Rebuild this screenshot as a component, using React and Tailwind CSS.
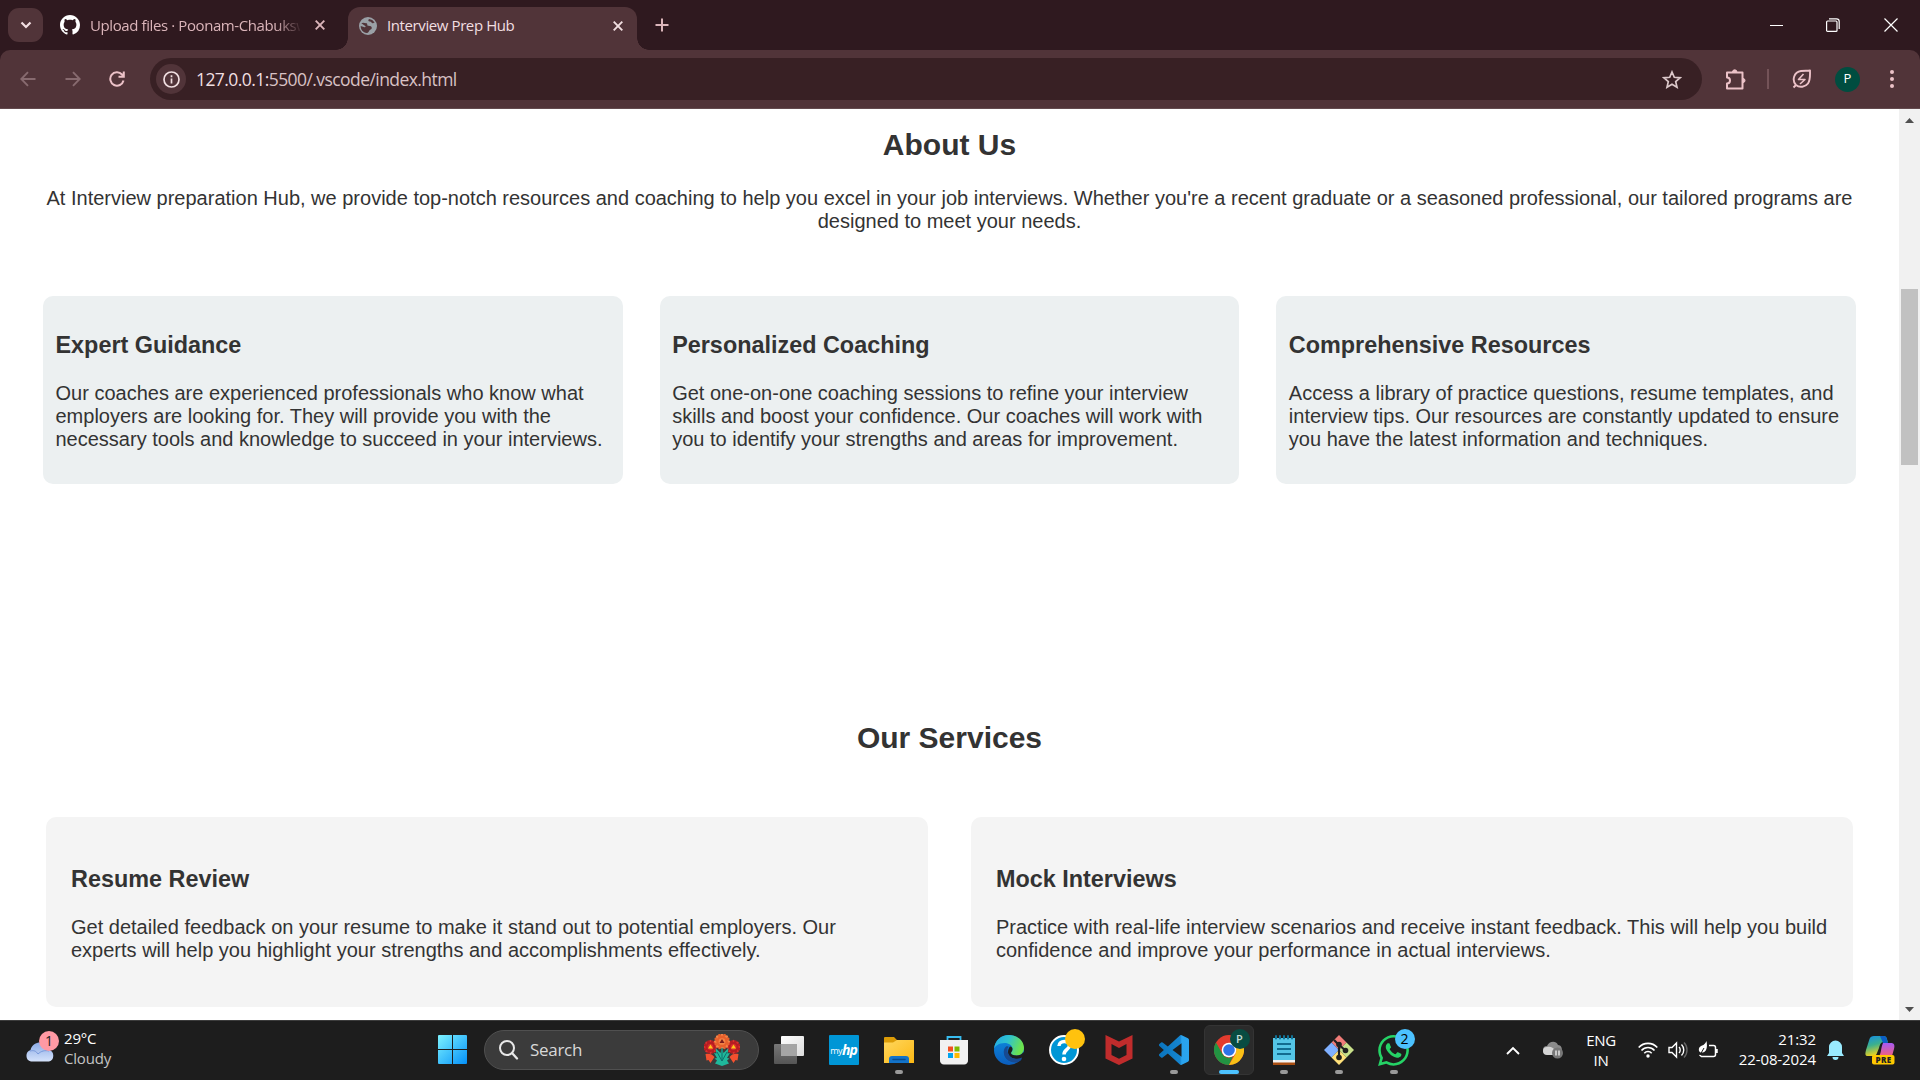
import React from "react";

const UI = "font-['Open_Sans','Noto_Sans',sans-serif]";

function TitleBar() {
  return (
    <div className="h-[50px] bg-[#2f191f] flex items-start shrink-0">
      <div className="h-[34px] ml-2 mt-2 w-[35px] rounded-[11px] bg-[#513439] flex items-center justify-center">
        <svg width="12" height="8" viewBox="0 0 12 8" fill="none" stroke="#f3dfe2" strokeWidth="2.2"><path d="M1.5 1.5 6 6 10.500 1.500" /></svg>
      </div>
      <div className="w-[305px] h-[50px] flex items-center pl-[17px]">
        <svg width="20" height="20" viewBox="0 0 16 16" fill="#fff" className="shrink-0"><path d="M8 0C3.580 0 0 3.580 0 8c0 3.540 2.290 6.530 5.470 7.590.4.070.55-.17.55-.38 0-.19-.01-.82-.01-1.490-2.010.370-2.530-.49-2.690-.94-.09-.23-.48-.94-.82-1.130-.28-.15-.68-.52-.01-.53.63-.01 1.080.58 1.230.82.72 1.210 1.870.87 2.330.66.070-.52.28-.87.51-1.070-1.780-.2-3.640-.89-3.640-3.950 0-.87.31-1.590.82-2.150-.08-.2-.36-1.020.08-2.120 0 0 .67-.21 2.200.82.64-.18 1.320-.27 2-.27s1.360.09 2 .27c1.530-1.040 2.200-.82 2.200-.82.44 1.100.16 1.920.08 2.120.51.56.82 1.270.82 2.150 0 3.070-1.870 3.750-3.650 3.950.29.25.54.73.54 1.480 0 1.070-.01 1.930-.01 2.200 0 .21.15.46.55.38A8.010 8.010 0 0 0 16 8c0-4.420-3.580-8-8-8z" /></svg>
        <div className={"ml-[10px] w-[210px] whitespace-nowrap text-[15px] tracking-[-0.4px] text-[#dbb5ba] [mask-image:linear-gradient(to_right,#000_185px,transparent_212px)] " + UI}>Upload files · Poonam-Chabuksw</div>
        <Cross color="#dbb5ba" className="ml-[15px]" />
      </div>
      <div className="relative w-[289px] h-[43px] mt-[7px] rounded-t-[12px] bg-[#513439] flex items-center pl-[11px] pb-[7px] pt-[1px]">
        <div className="absolute -left-3 bottom-0 w-3 h-3 bg-[radial-gradient(circle_at_0_0,transparent_11.5px,#513439_12px)]" />
        <div className="absolute -right-3 bottom-0 w-3 h-3 bg-[radial-gradient(circle_at_100%_0,transparent_11.5px,#513439_12px)]" />
        <svg width="18" height="18" viewBox="0 0 18 18"><circle cx="9" cy="9" r="9" fill="#9aa0a6" /><path d="M2.300 6.300C4 5 5.500 6.200 7.300 6.200 9 6.200 7.500 8.700 9.500 8.800c2 .1 3.300.7 3.300 2.200 0 1.800-2.300 1.500-2.800 3-.3 1-1 2.200-2.300 2C4 15.600 1.600 12.500 1.700 9l3.800 1.200c1.500.3 1.500-1.200 0-1.700zM10 1.900C8.800 3.200 9.300 4.600 10.800 4.500c1.700-.1 1.500 2 3.200 1.700.9-.2 1.200-.5 1.600-.7A7.500 7.500 0 0 0 10 1.900z" fill="#513439" /></svg>
        <span className={"ml-[10px] w-[215px] text-[15px] tracking-[-0.4px] text-[#f1dfe1] whitespace-nowrap " + UI}>Interview Prep Hub</span>
        <Cross color="#f1dfe1" className="ml-[11px]" />
      </div>
      <svg width="14" height="14" viewBox="0 0 14 14" stroke="#dbb5ba" strokeWidth="2" className="ml-[18px] mt-[18px]"><path d="M7 .5v13M.5 7h13" /></svg>
      <div className="ml-auto flex items-center h-[49px] pr-[22px]">
        <svg width="13" height="14" viewBox="0 0 13 14" stroke="#fff"><path d="M0 7.500h13" /></svg>
        <svg width="14" height="14" viewBox="0 0 14 14" fill="none" stroke="#fff" strokeWidth="1.200" className="ml-[43px]"><rect x=".6" y="3" width="10.400" height="10.400" rx="1" /><path d="M3 .8h7.500a2.700 2.700 0 0 1 2.700 2.700V11" /></svg>
        <svg width="14" height="14" viewBox="0 0 14 14" stroke="#fff" strokeWidth="1.200" className="ml-[44px]"><path d="m.5.5 13 13m0-13-13 13" /></svg>
      </div>
    </div>
  );
}

function Cross({ color, className }) {
  return <svg width="10" height="10" viewBox="0 0 10 10" stroke={color} strokeWidth="1.900" className={"shrink-0 " + className}><path d="m.7.7 8.600 8.600m0-8.600L.7 9.300" /></svg>;
}

function Toolbar() {
  return (
    <div className="bg-[#2f191f] shrink-0">
      <div className="h-[59px] bg-[#513439] rounded-t-[10px] border-b border-[#634a4e] flex items-center">
        <svg width="16" height="16" viewBox="0 0 16 16" fill="none" stroke="#876a6f" strokeWidth="1.900" className="ml-5 shrink-0"><path d="M15.500 8H1.500M8 1.200 1.300 8 8 14.800" /></svg>
        <svg width="16" height="16" viewBox="0 0 16 16" fill="none" stroke="#876a6f" strokeWidth="1.900" className="ml-[29px] shrink-0"><path d="M.5 8h14M8 1.200 14.700 8 8 14.800" /></svg>
        <svg width="16" height="16" viewBox="0 0 16 16" fill="none" stroke="#ecc2c8" strokeWidth="2" className="ml-[28px] shrink-0"><path d="M14.500 9.500A6.700 6.700 0 1 1 13 3.500l1.500 1.700M14.800.5v5.300H9.500" /></svg>
        <div className="ml-[25px] w-[1552px] shrink-0 h-[42px] rounded-full bg-[#382024] flex items-center pl-[6px] pr-[20px]">
          <div className="size-[30px] rounded-full bg-[#513439] flex items-center justify-center">
            <svg width="17" height="17" viewBox="0 0 17 17" fill="none" stroke="#f1dfe1" strokeWidth="1.700"><circle cx="8.500" cy="8.500" r="7.500" /><path d="M8.500 7.500v5M8.500 4.300v1.900" /></svg>
          </div>
          <span className={"ml-[10px] text-[17.5px] tracking-[-0.57px] text-[#f1dfe1] whitespace-nowrap " + UI}>127.0.0.1:<span className="text-[#d8c2c5]">5500/.vscode/index.html</span></span>
          <svg width="20" height="19" viewBox="0 0 20 19" fill="none" stroke="#dcc8ca" strokeWidth="1.700" className="ml-auto"><path d="m10 2 2.300 5.300 5.700.5-4.300 3.800 1.300 5.600-5-3-5 3 1.300-5.600L2 7.800l5.700-.5z" /></svg>
        </div>
        <svg width="21" height="21" viewBox="0 0 21 21" fill="none" stroke="#ecc2c8" strokeWidth="2" strokeLinejoin="round" className="ml-[23px] shrink-0"><path d="M2 3.500h15.500v16H2v-5c4-.3 4-6 0-6z" /><path d="M7.500 3a2.200 2.200 0 0 1 4.400 0zM18 9.500a2 2 0 0 1 0 4z" fill="#ecc2c8" strokeWidth="1" /></svg>
        <div className="w-[2px] h-5 bg-[#745358] ml-[21px]" />
        <svg width="20" height="20" viewBox="0 0 20 20" fill="none" stroke="#ecc2c8" strokeWidth="1.900" strokeLinejoin="round" className="ml-[23px] shrink-0"><path d="M1.500 18.500 4 16M4 16C-.5 11 2 3 9 2c4-.5 6 0 9-.5C18 6 18.500 11 16 14.500S7.500 19 4 16z" /><path d="M11.500 5 6.500 10.500h6.500L8 15" strokeWidth="1.600" /></svg>
        <div className={"ml-[23px] size-[25px] shrink-0 rounded-full bg-[#004d40] text-white text-[13px] flex items-center justify-center " + UI}>P</div>
        <div className="ml-[30px] flex flex-col gap-[3px]">
          <i className="size-1 rounded-full bg-[#ecc2c8]" /><i className="size-1 rounded-full bg-[#ecc2c8]" /><i className="size-1 rounded-full bg-[#ecc2c8]" />
        </div>
      </div>
    </div>
  );
}

const features = [
  ["Expert Guidance", ["Our coaches are experienced professionals who know what", "employers are looking for. They will provide you with the", "necessary tools and knowledge to succeed in your interviews."]],
  ["Personalized Coaching", ["Get one-on-one coaching sessions to refine your interview", "skills and boost your confidence. Our coaches will work with", "you to identify your strengths and areas for improvement."]],
  ["Comprehensive Resources", ["Access a library of practice questions, resume templates, and", "interview tips. Our resources are constantly updated to ensure", "you have the latest information and techniques."]],
];
const services = [
  ["Resume Review", ["Get detailed feedback on your resume to make it stand out to potential employers. Our", "experts will help you highlight your strengths and accomplishments effectively."]],
  ["Mock Interviews", ["Practice with real-life interview scenarios and receive instant feedback. This will help you build", "confidence and improve your performance in actual interviews."]],
];

function Lines({ lines }) {
  return lines.map((l) => <span key={l} className="block whitespace-nowrap">{l}</span>);
}

function Page() {
  return (
    <div className="flex-1 min-h-0 flex bg-white">
      <main className="flex-1 overflow-hidden text-[#333] text-[20px] leading-[23px] font-['Liberation_Sans',Arial,sans-serif]">
        <h2 className="mt-[19px] text-center font-bold text-[30px] leading-[34px]">About Us</h2>
        <p className="mt-[25px] text-center"><Lines lines={["At Interview preparation Hub, we provide top-notch resources and coaching to help you excel in your job interviews. Whether you're a recent graduate or a seasoned professional, our tailored programs are", "designed to meet your needs."]} /></p>
        <div className="mt-[63px] mx-[43px] grid grid-cols-3 gap-[37px]">
          {features.map(([t, l]) => (
            <section key={t} className="h-[188px] rounded-[10px] bg-[#ecf0f1] pl-[12.5px] pt-[36px]">
              <h3 className="font-bold text-[23.4px] leading-[27px]">{t}</h3>
              <p className="mt-[23px]"><Lines lines={l} /></p>
            </section>
          ))}
        </div>
        <h2 className="mt-[237px] text-center font-bold text-[30px] leading-[34px]">Our Services</h2>
        <div className="mt-[62px] mx-[46px] grid grid-cols-2 gap-[43px]">
          {services.map(([t, l]) => (
            <section key={t} className="h-[190px] rounded-[10px] bg-[#f4f4f4] pl-[25px] pt-[49px]">
              <h3 className="font-bold text-[23.4px] leading-[27px]">{t}</h3>
              <p className="mt-[23px]"><Lines lines={l} /></p>
            </section>
          ))}
        </div>
      </main>
      <div className="w-[21px] bg-[#f1f1f1] flex flex-col items-center">
        <svg width="9" height="5" viewBox="0 0 9 5" className="mt-[9px]" fill="#505050"><path d="M0 5 4.500 0 9 5z" /></svg>
        <div className="mt-[166px] w-[17px] h-[176px] bg-[#c1c1c1]" />
        <svg width="9" height="5" viewBox="0 0 9 5" className="mt-auto mb-[8px]" fill="#505050"><path d="M0 0h9L4.500 5z" /></svg>
      </div>
    </div>
  );
}

function Slot({ children, running, active, badge }) {
  return (
    <div className={"relative w-[50px] h-[50px] mx-[2.500px] rounded-[6px] flex items-center justify-center shrink-0 " + (active ? "bg-[#2b2b2b] border border-[#343434]" : "")}>
      {children}
      {badge}
      {running && <i className="absolute bottom-[1px] left-[21px] w-2 h-1 rounded-full bg-[#9a9a9a]" />}
      {active && <i className="absolute bottom-0 left-[14px] w-5 h-1 rounded-full bg-[#4cc2ff]" />}
    </div>
  );
}

function Flower() {
  const bloom = (x, y, r, a, b, c) => (
    <g key={x + "," + y} transform={`translate(${x} ${y})`}>
      {Array.from({ length: 16 }, (_, i) => <ellipse key={i} cx="0" cy={-r * 0.68} rx={r * 0.2} ry={r * 0.34} fill={i % 2 ? a : b} transform={`rotate(${i * 22.5})`} />)}
      <circle r={r * 0.72} fill={a} /><circle r={r * 0.42} fill={b} /><path d="M-2.500 1.500 0-2.500 2.500 1.500z" fill={c} />
    </g>
  );
  return (
    <svg width="36" height="32" viewBox="0 0 36 32">
      <path d="M1.500 20c3.500-1 7 0 9 3l-4 6-2-3-2 .5zM34.500 20c-3.500-1-7 0-9 3l4 6 2-3 2 .5z" fill="#f4502f" />
      {bloom(6.500, 13, 7, "#b71c22", "#dc2f2c", "#ffc61a")}
      {bloom(29.500, 13, 7, "#b71c22", "#dc2f2c", "#ffc61a")}
      {bloom(18, 7.500, 8, "#e8602c", "#f58345", "#7c1c1c")}
      <path d="M18 13l1.500 6 5-5-1 5.500 2.500-.5-3 5 2.500.5-2.500 2 2 3-7 2.500-7-2.500 2-3-2.500-2 2.500-.5-3-5 2.500.5-1-5.500 5 5z" fill="#1fb89b" />
      <path d="M18 14v13M18 27l-5-9M18 27l5-9" stroke="#0f6f6c" strokeWidth="1" fill="none" />
    </svg>
  );
}

const icons = {
  taskView: <svg width="30" height="28" viewBox="0 0 30 28"><defs><linearGradient id="tv1" x2="1" y2="1"><stop stopColor="#fff" /><stop offset="1" stopColor="#dcdcdc" /></linearGradient><linearGradient id="tv2" x2="0" y2="1"><stop stopColor="#777" /><stop offset="1" stopColor="#555" /></linearGradient></defs><rect y="8" width="23" height="20" rx="1" fill="url(#tv2)" /><rect x="7" width="23" height="20" rx="1" fill="url(#tv1)" /><path d="M7 8h16v12H7z" fill="#a5a5a5" /></svg>,
  hp: <div className="size-[30px] rounded-[1px] bg-[#0096d6] text-white flex items-center justify-center font-['Open_Sans',sans-serif] leading-none"><span className="text-[9px] tracking-[-0.5px]">my</span><b className="text-[14px] italic tracking-[-1px]">hp</b></div>,
  folder: <svg width="30" height="28" viewBox="0 0 30 28"><defs><linearGradient id="fo" x2="1" y2="1"><stop stopColor="#ffd75e" /><stop offset="1" stopColor="#fcb814" /></linearGradient></defs><path d="M0 2a1 1 0 0 1 1-1h9l3 3h16a1 1 0 0 1 1 1v8H0z" fill="#dc9c07" /><path d="M0 6.500h9L13 4h16a1 1 0 0 1 1 1v22H0z" fill="url(#fo)" /><path d="M5 27v-4a3 3 0 0 1 3-3h14a3 3 0 0 1 3 3v4z" fill="#1373c9" /><path d="M9 23.500h12" stroke="#084b8e" strokeWidth="1.500" strokeLinecap="round" /></svg>,
  store: <svg width="30" height="30" viewBox="0 0 30 30"><path d="M8.500 7V2h13v5" fill="none" stroke="#38bdf0" strokeWidth="1.800" /><path d="M1 5h28v20a4 4 0 0 1-4 4.500H5A4 4 0 0 1 1 25z" fill="#f1f1f1" /><path d="M9 11.500h5v5H9z" fill="#f25022" /><path d="M15.500 11.500h5v5h-5z" fill="#7fba00" /><path d="M9 18h5v5H9z" fill="#00a4ef" /><path d="M15.500 18h5v5h-5z" fill="#ffb900" /></svg>,
  edge: <svg width="30" height="30" viewBox="0 0 30 30"><defs><linearGradient id="e1" x1="0" x2="1" y1="0" y2=".3"><stop stopColor="#22a7e8" /><stop offset=".5" stopColor="#2fc3cf" /><stop offset="1" stopColor="#6ce34d" /></linearGradient><linearGradient id="e2" x2="0" y2="1"><stop stopColor="#0d8de0" /><stop offset="1" stopColor="#0b5dbd" /></linearGradient></defs><circle cx="15" cy="15" r="15" fill="url(#e2)" /><path d="M0 14C1 5 7 0 15 0c9 0 15 6 15 13 0 5-3.500 7.500-7.500 7.500-3.500 0-5.500-1-5.500-2.500 0-1 1.500-1.500 1.500-4C18.500 10.500 15 8 10.500 8 5 8 1 11 0 14z" fill="url(#e1)" /><path d="M13 11c-7 4-2 17 9 16.500 2.500 0 5-2 6-4-6 3-16 0-15-8 0-1.500 1-3 2-3.500z" fill="#174a91" /><path d="M18.500 14c0 2.500-1.500 3-1.500 4 0 1.500 2 2.500 5.500 2.500 3 0 5.500-1 7-3.500l1 2.500-2 3.500c-6 2.500-14.500.5-14.500-6 0-2.500 1-4.500 2-5.500 1.500 0 2.500 1.300 2.500 2.500z" fill="#1d1d1d" /><path d="M13.500 14c-.5 8 7 12 14.500 8.500l-1.500 3C20 29 9 26 10 16z" fill="#174a91" /></svg>,
  help: <svg width="30" height="30" viewBox="0 0 30 30"><circle cx="15" cy="15" r="14" fill="#0096d6" stroke="#fff" strokeWidth="2" /><path d="M10 11c0-6 10.500-6 10.500-.5 0 4-5.500 4-5.500 9" fill="none" stroke="#fff" strokeWidth="3.500" /><circle cx="15" cy="24" r="2.300" fill="#fff" /></svg>,
  mcafee: <svg width="28" height="30" viewBox="0 0 28 30"><path d="m.5 0L14 6.500 27.500 0v23.500L14 30 .5 23.500zm6 9v11l7.500 3.700 7.500-3.700V9L14 13z" fill="#c02c2c" fillRule="evenodd" /></svg>,
  vscode: <svg width="30" height="30" viewBox="0 0 24 24"><defs><linearGradient id="vs" x2="1"><stop stopColor="#0a74bd" /><stop offset=".7" stopColor="#1585d0" /><stop offset=".76" stopColor="#29a3ee" /><stop offset="1" stopColor="#2aa5f0" /></linearGradient></defs><path fill="url(#vs)" d="M23.150 2.587L18.210.21a1.494 1.494 0 0 0-1.705.29l-9.460 8.630-4.120-3.128a.999.999 0 0 0-1.276.057L.327 7.261A1 1 0 0 0 .326 8.740L3.899 12 .326 15.260a1 1 0 0 0 .001 1.479L1.650 17.940a.999.999 0 0 0 1.276.057l4.120-3.128 9.460 8.630a1.492 1.492 0 0 0 1.704.290l4.942-2.377A1.500 1.500 0 0 0 24 20.060V3.939a1.500 1.500 0 0 0-.85-1.352zm-5.146 14.861L10.826 12l7.178-5.448v10.896z" /></svg>,
  chrome: <svg width="30" height="30" viewBox="0 0 30 30"><circle cx="15" cy="15" r="15" fill="#e33b2e" /><path d="M2 7.500 8.500 19c2.500 4.500 8 4.500 10.500 2L15 30A15 15 0 0 1 2 7.500z" fill="#229342" /><path d="M28 7.500H15c7 1 8.500 7 6.500 11.200L15 30A15 15 0 0 0 28 7.500z" fill="#fbc116" /><circle cx="15" cy="15" r="7.300" fill="#fff" /><circle cx="15" cy="15" r="5.800" fill="#2f73e8" /></svg>,
  notepad: <svg width="22" height="30" viewBox="0 0 22 30"><path d="M0 26h22v4H0z" fill="#a94e12" /><path d="M0 24h22v3.500H0z" fill="#f3f3f3" /><path d="M0 3h22v22H0z" fill="#54c5e6" /><path d="M3 1v2.500m4-2.500v2.500m4-2.500v2.500m4-2.500v2.500m4-2.500v2.500" stroke="#117296" strokeWidth="2" strokeLinecap="round" /><path d="M4 9h14M4 14h14M4 19h14" stroke="#126c90" strokeWidth="2" /></svg>,
  git: <svg width="30" height="30" viewBox="0 0 30 30"><path d="m15 0 7.500 7.500-7.500 7.500-7.500-7.500z" fill="#f07c78" /><path d="M7.500 7.500 15 15l-7.500 7.500L0 15z" fill="#80b0ff" /><path d="M22.500 7.500 30 15l-7.500 7.500L15 15z" fill="#c8e08a" /><path d="m15 15 7.500 7.500L15 30l-7.500-7.500z" fill="#ffe17a" /><path d="m10 5 5 5v14M15 10l6 5" stroke="#202020" strokeWidth="2.200" fill="none" /><circle cx="15" cy="9.500" r="2.800" fill="#202020" /><circle cx="21.500" cy="15.500" r="2.800" fill="#202020" /><circle cx="15" cy="22.500" r="2.800" fill="#202020" /></svg>,
  whatsapp: <svg width="31" height="31" viewBox="0 0 24 24" fill="#25d366"><path d="M17.472 14.382c-.297-.149-1.758-.867-2.030-.967-.273-.099-.471-.148-.67.150-.197.297-.767.966-.94 1.164-.173.199-.347.223-.644.075-.297-.15-1.255-.463-2.390-1.475-.883-.788-1.480-1.761-1.653-2.059-.173-.297-.018-.458.130-.606.134-.133.298-.347.446-.520.149-.174.198-.298.298-.497.099-.198.050-.371-.025-.520-.075-.149-.669-1.612-.916-2.207-.242-.579-.487-.5-.669-.510-.173-.008-.371-.01-.570-.01-.198 0-.520.074-.792.372-.272.297-1.040 1.016-1.040 2.479 0 1.462 1.065 2.875 1.213 3.074.149.198 2.096 3.200 5.077 4.487.709.306 1.262.489 1.694.625.712.227 1.360.195 1.871.118.571-.085 1.758-.719 2.006-1.413.248-.694.248-1.289.173-1.413-.074-.124-.272-.198-.570-.347m-5.421 7.403h-.004a9.870 9.870 0 0 1-5.031-1.378l-.361-.214-3.741.982.998-3.648-.235-.374a9.860 9.860 0 0 1-1.510-5.260c.001-5.450 4.436-9.884 9.888-9.884 2.640 0 5.122 1.030 6.988 2.898a9.825 9.825 0 0 1 2.893 6.994c-.003 5.450-4.437 9.884-9.885 9.884m8.413-18.297A11.815 11.815 0 0 0 12.050 0C5.495 0 .160 5.335.157 11.892c0 2.096.547 4.142 1.588 5.945L.057 24l6.305-1.654a11.882 11.882 0 0 0 5.683 1.448h.005c6.554 0 11.890-5.335 11.893-11.893a11.821 11.821 0 0 0-3.480-8.413z" /></svg>,
};

function Taskbar() {
  return (
    <div className={"h-[60px] shrink-0 bg-[#1d1d1d] border-t border-[#3c3c3c] pb-px flex items-center text-white " + UI}>
      <div className="relative ml-[25px] w-[30px] h-[30px] -mt-[3px]">
        <svg width="30" height="20" viewBox="0 0 30 20" className="mt-[8px]"><defs><linearGradient id="cl" x2="0" y2="1"><stop stopColor="#8cabe6" /><stop offset="1" stopColor="#d4e2fb" /></linearGradient></defs><path d="M6 19.500A6 6 0 0 1 5.500 8C7 2.500 11 .5 15 .5c5 0 8 3 9 7.500a6 6 0 0 1 0 11.500z" fill="url(#cl)" /><path d="M5 9c4-1 6 0 8 3 3-3 7-4 11-3" fill="none" stroke="#7898da" /></svg>
        <span className="absolute left-[14px] -top-[3px] size-5 rounded-full bg-[#ff99a4] text-[#222] text-[14px] leading-5 text-center">1</span>
      </div>
      <div className="ml-[9px] w-[372px] -mt-[4px] text-[15px] leading-[20px] tracking-[-0.2px]"><div>29°C</div><div className="text-[#c4c4c4]">Cloudy</div></div>
      <svg width="30" height="30" viewBox="0 0 30 30" className="ml-[2px]"><defs><linearGradient id="wn" x2="1" y2="1"><stop stopColor="#7df3ff" /><stop offset="1" stopColor="#0490f8" /></linearGradient></defs><path d="M1 0h13v14H0V1a1 1 0 0 1 1-1zM15 0h13a1 1 0 0 1 1 1v13H15zM0 15h14v14H1a1 1 0 0 1-1-1zM15 15h14v13a1 1 0 0 1-1 1H15z" fill="url(#wn)" /></svg>
      <div className="ml-[16px] w-[275px] h-10 rounded-full bg-[#3b3b3b] border border-[#505050] flex items-center pl-[14px] pr-[18px]">
        <svg width="20" height="20" viewBox="0 0 20 20" fill="none" stroke="#e8e8e8" strokeWidth="2"><circle cx="8" cy="8" r="7" /><path d="m13 13 5 5.500" strokeWidth="2.300" strokeLinecap="round" /></svg>
        <span className="ml-[11px] text-[17px] tracking-[-0.3px] text-[#d8d8d8]">Search</span>
        <div className="ml-auto"><Flower /></div>
      </div>
      <div className="ml-[2px] flex">
        <Slot>{icons.taskView}</Slot>
        <Slot>{icons.hp}</Slot>
        <Slot running>{icons.folder}</Slot>
        <Slot>{icons.store}</Slot>
        <Slot>{icons.edge}</Slot>
        <Slot badge={<i className="absolute left-[26px] top-[4px] size-5 rounded-full bg-[#ffc20e]" />}>{icons.help}</Slot>
        <Slot>{icons.mcafee}</Slot>
        <Slot running>{icons.vscode}</Slot>
        <Slot active badge={<span className="absolute left-[25px] top-[3px] size-5 rounded-full bg-[#084c42] text-[#c4dcd6] font-semibold text-[11px] leading-5 text-center">P</span>}>{icons.chrome}</Slot>
        <Slot running>{icons.notepad}</Slot>
        <Slot running>{icons.git}</Slot>
        <Slot running badge={<span className="absolute left-[26px] top-[4px] size-5 rounded-full bg-[#4cc2ff] text-black text-[14px] leading-5 text-center">2</span>}>{icons.whatsapp}</Slot>
      </div>
      <svg width="14" height="9" viewBox="0 0 14 9" fill="none" stroke="#fff" strokeWidth="1.900" className="ml-auto"><path d="m1 8 6-6 6 6" /></svg>
      <svg width="20" height="18" viewBox="0 0 20 18" className="ml-[23px]"><path d="M4 13a4 4 0 0 1 0-8C6 0 13-1 15 4c3 0 4 3 4 5l-5 4z" fill="#8a8a8a" /><path d="M4 14a4 4 0 0 1 0-8c4-1 6 1 8 3v5z" fill="#d4d4d4" /><circle cx="14.500" cy="12" r="5.500" fill="#777" /><path d="M13 9.500v5m3-5v5" stroke="#fff" strokeWidth="1.200" /></svg>
      <div className="ml-[21px] w-[34px] -mt-px text-center text-[15px] leading-[20px] tracking-[-0.3px]">ENG<br />IN</div>
      <svg width="20" height="16" viewBox="0 0 20 16" fill="none" stroke="#fff" strokeWidth="1.600" className="ml-[20px]"><path d="M.7 5.500c5-5.500 13.600-5.500 18.600 0M3.500 8.500c3.500-4 9.500-4 13 0M6.300 11.200c2-2.300 5.400-2.300 7.400 0" /><circle cx="10" cy="14" r="1.700" fill="#fff" stroke="none" /></svg>
      <svg width="20" height="18" viewBox="0 0 20 18" fill="none" stroke="#fff" strokeWidth="1.400" className="ml-[10px]"><path d="M1 6.500h3L8.500 2v14L4 11.500H1zM11 6c1.600 1.500 1.600 4.500 0 6M13.500 3.500c3 3 3 8 0 11" /><path d="M16 1.500c4 4 4 11 0 15" stroke="#666" /></svg>
      <svg width="20" height="18" viewBox="0 0 20 18" fill="none" stroke="#fff" strokeWidth="1.500" className="ml-[10px]"><path d="M11 4.500h4.500a2 2 0 0 1 2 2v7a2 2 0 0 1-2 2H3.500L1.500 14M19 8v4" /><path d="M8.500 0c1 5 .5 11-4 11.500C-.5 12 0 6 3.500 4.800 6.500 3.800 7.500 2 8.500 0z" fill="#fff" stroke="none" /><path d="m2 14 4-7" stroke="#1d1d1d" strokeWidth="1" /></svg>
      <div className="ml-[17px] w-[81px] -mt-[3px] flex flex-col items-end text-[15px] leading-[20px] tracking-[-0.1px] whitespace-nowrap"><span>21:32</span><span>22-08-2024</span></div>
      <svg width="17" height="20" viewBox="0 0 17 20" fill="#99ebff" className="ml-[11px]"><path d="M2 13V7a6.500 6.500 0 0 1 13 0v6l2 3H0zM5.500 17h6a3 3 0 0 1-6 0z" /></svg>
      <svg width="30" height="29" viewBox="0 0 30 29" className="ml-[21px] mr-[25px] mt-px"><defs><linearGradient id="c1" x2=".3" y2="1"><stop stopColor="#138ee8" /><stop offset=".5" stopColor="#3cb08d" /><stop offset="1" stopColor="#f1d21c" /></linearGradient><linearGradient id="c2" x2="0" y2="1"><stop stopColor="#a65af5" /><stop offset="1" stopColor="#f0607e" /></linearGradient></defs><path d="M9 0h10c3 0 3 4 4 6h-4c-3 0-4 2-5 6l-2 5c-1 3-3 3-5 3H3c-3 0-3-2-2-6L4.500 3C5 1 7 0 9 0z" fill="url(#c1)" /><path d="M15 0h4c3 0 3 4 4 7h-5z" fill="#0b5fc6" /><path d="M18 7h8c3 0 4 2 3 6l-2 7H14c2-1 2-9 4-13z" fill="url(#c2)" /><rect x="7" y="19" width="22.500" height="9.500" rx="2" fill="#ffc800" /><text x="18.500" y="26.700" textAnchor="middle" fontFamily="Open Sans" fontWeight="800" fontSize="8" letterSpacing=".4" fill="#222">PRE</text></svg>
    </div>
  );
}

export default function App() {
  return (
    <div className="w-[1920px] h-[1080px] overflow-hidden flex flex-col">
      <TitleBar />
      <Toolbar />
      <Page />
      <Taskbar />
    </div>
  );
}
